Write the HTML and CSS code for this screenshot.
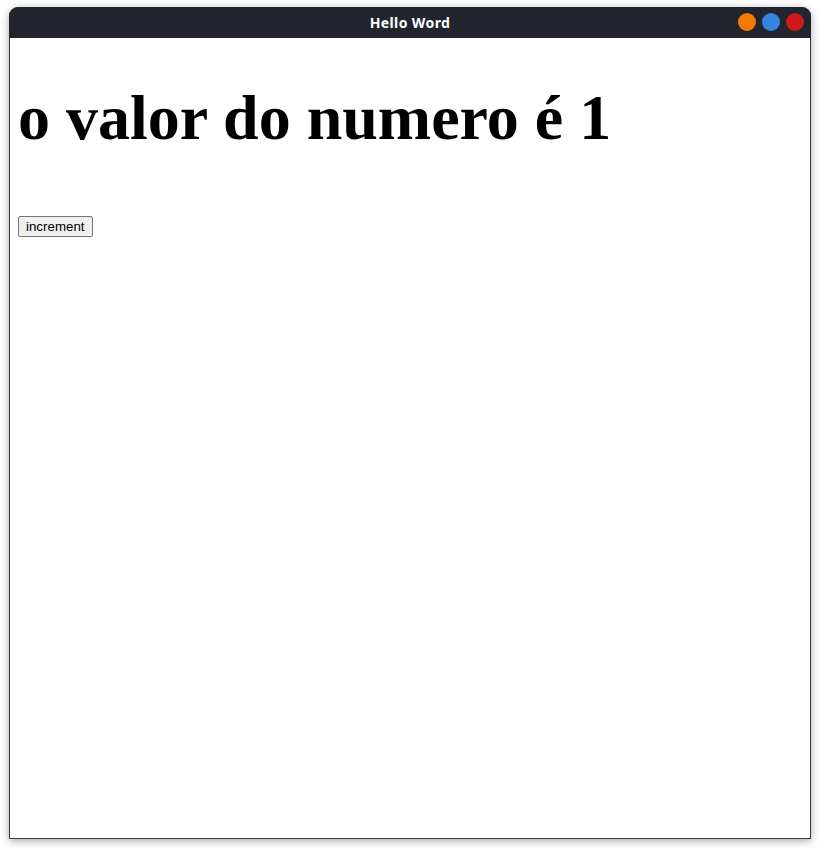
FILE: index.html
```html
<!DOCTYPE html>
<html>
<head>
<meta charset="utf-8">
<link rel="stylesheet" href="styles.css">
</head>
<body>
<div class="window">
  <div class="titlebar">
    <span class="title">Hello Word</span>
    <div class="controls">
      <span class="dot orange"></span>
      <span class="dot blue"></span>
      <span class="dot red"></span>
    </div>
  </div>
  <div class="content">
    <h1 class="heading">o valor do numero é 1</h1>
    <button class="btn">increment</button>
  </div>
</div>
</body>
</html>
```
FILE: styles.css
```css
html, body {
  margin: 0;
  padding: 0;
  background: #ffffff;
}
body {
  padding: 7px 9px 9px 9px;
  width: 820px;
  height: 848px;
  box-sizing: border-box;
}
.window {
  width: 802px;
  height: 832px;
  display: flex;
  flex-direction: column;
  border-radius: 9px 9px 0 0;
  box-shadow: 0 2px 8px rgba(0,0,0,0.35);
  background: #3b3b3b;
  overflow: hidden;
}
.titlebar {
  height: 31px;
  flex: none;
  background: #22252d;
  position: relative;
  display: flex;
  align-items: center;
  justify-content: center;
}
.title {
  color: #ffffff;
  font-family: "Noto Sans", "DejaVu Sans", sans-serif;
  font-weight: bold;
  font-size: 14px;
  letter-spacing: 0.4px;
}
.controls {
  position: absolute;
  right: 7px;
  top: 6px;
  display: flex;
  gap: 6px;
}
.dot {
  width: 18px;
  height: 18px;
  border-radius: 50%;
  display: block;
}
.orange { background: #f57900; }
.blue { background: #3584e4; }
.red { background: #d0191c; }
.content {
  flex: 1;
  margin: 0 1px 1px 1px;
  background: #ffffff;
  padding: 1px 8px 0 8px;
  font-family: "Liberation Serif", serif;
}
.heading {
  font-family: "Liberation Serif", serif;
  font-weight: bold;
  font-size: 64px;
  margin: 42px 0 61px 0;
  color: #000;
}
.btn {
  font-family: "Liberation Sans", Arial, sans-serif;
  font-size: 13.333px;
  padding: 2px 7px;
  background: #efefef;
  border: 1px solid #767676;
  border-radius: 2px;
  color: #000;
}
```
